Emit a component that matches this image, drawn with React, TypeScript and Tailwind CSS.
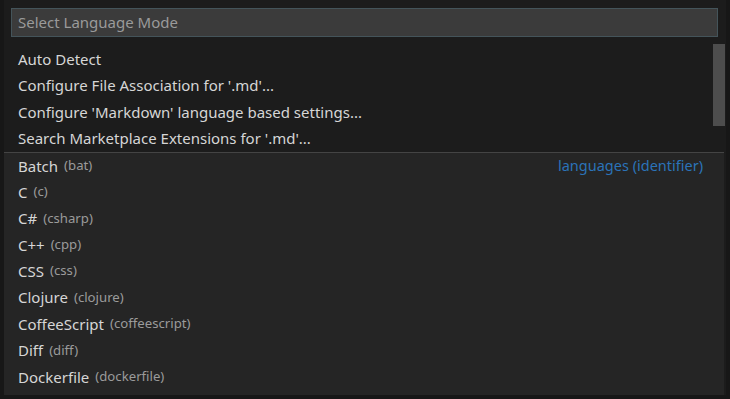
import React from "react";

const top = [
  "Auto Detect",
  "Configure File Association for '.md'...",
  "Configure 'Markdown' language based settings...",
  "Search Marketplace Extensions for '.md'...",
];

const langs: [string, string][] = [
  ["Batch", "bat"],
  ["C", "c"],
  ["C#", "csharp"],
  ["C++", "cpp"],
  ["CSS", "css"],
  ["Clojure", "clojure"],
  ["CoffeeScript", "coffeescript"],
  ["Diff", "diff"],
  ["Dockerfile", "dockerfile"],
];

export default function App() {
  return (
    <div
      className="w-[730px] h-[399px] bg-[#171717] overflow-hidden flex flex-col"
      style={{ fontFamily: '"Noto Sans", "Open Sans", sans-serif' }}
    >
      <div className="ml-[4px] w-[722px] h-[395px] bg-[#1c1c1c] flex flex-col relative">
        <div className="pt-[8px] pl-[7px] pr-[8px]">
          <div className="h-[29px] bg-[#3b3b3b] border border-[#44545a] flex items-center pl-[6px] text-[15px] text-[#9a9a9a]">
            Select Language Mode
          </div>
        </div>
        <div className="mt-[9px] flex flex-col">
          {top.map((t) => (
            <div key={t} className="h-[26.4px] flex items-center pl-[14px] text-[15px] text-[#d6d6d6] whitespace-nowrap">
              {t}
            </div>
          ))}
        </div>
        <div className="flex-1 bg-[#252525] border-t border-[#444444] mr-[2px] flex flex-col">
          {langs.map(([l, id], i) => (
            <div key={l} className="h-[26.4px] flex items-center pl-[14px] pr-[21px] whitespace-nowrap">
              <span className="text-[15px] text-[#d6d6d6]">{l}</span>
              <span className="ml-[6px] text-[13.2px] text-[#9b9b9b]">({id})</span>
              {i === 0 && (
                <span className="ml-auto text-[14.5px] text-[#2b73b8]">languages (identifier)</span>
              )}
            </div>
          ))}
        </div>
        <div className="absolute left-[709px] top-[44px] w-[12px] h-[82px] bg-[#4d4d4d]" />
      </div>
    </div>
  );
}
